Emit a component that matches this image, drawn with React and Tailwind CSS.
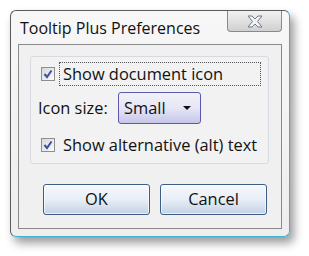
import React from 'react';

const font = { fontFamily: '"Open Sans", "Noto Sans", "Liberation Sans", sans-serif' };

const Check = () => (
  <span className="flex h-[14px] w-[14px] items-center justify-center border border-[#8f8f8f] bg-gradient-to-br from-[#d8d8d8] to-[#fbfbfb]">
    <svg width="10" height="10" viewBox="0 0 10 10">
      <path d="M1.5 5 L4 8 L8.5 1.5" fill="none" stroke="#3d4fa8" strokeWidth="2" />
    </svg>
  </span>
);

const Button = ({ children }) => (
  <button className="flex h-[31px] w-[107px] items-center justify-center rounded-[3px] border border-[#3c5d86] bg-gradient-to-b from-[#f6f9fc] via-[#e8eef6] to-[#c3d2e5] text-[16.4px] text-[#111] shadow-[inset_0_0_0_1px_#ffffffaa]">
    {children}
  </button>
);

export default function App() {
  return (
    <div className="h-[256px] w-[309px] bg-white pl-[10px] pt-[10px]" style={font}>
      <div className="relative flex h-[227px] w-[280px] flex-col rounded-[6px] border border-[#5b5b5b] border-r-[#3fb0cf] border-b-[#3fb0cf] bg-gradient-to-b from-[#f7f7f7] to-[#eeeeee] px-[7px] pb-[7px] shadow-[4px_6px_10px_rgba(0,0,0,0.4)]">
        <div className="flex h-[33px] items-start justify-between">
          <span className="pl-[2px] pt-[7px] text-[16px] leading-[20px] text-[#111]">Tooltip Plus Preferences</span>
          <div className="flex h-[21px] w-[55px] items-center justify-center rounded-b-[4px] border border-t-0 border-[#8a8a8a] bg-gradient-to-b from-[#f2f2f2] to-[#d0d0d0]">
            <svg width="18" height="13" viewBox="0 0 18 13">
              <path
                d="M2 1 H6 L9 4 L12 1 H16 L11.5 6.5 L16 12 H12 L9 9 L6 12 H2 L6.5 6.5 Z"
                fill="#f4f4f4"
                stroke="#707a88"
                strokeWidth="1"
                strokeLinejoin="round"
              />
            </svg>
          </div>
        </div>
        <div className="flex flex-1 flex-col border border-[#8a8a8a] bg-[#f0f0f0] pl-[11px] pt-[11px]">
          <div className="flex h-[108px] w-[239px] flex-col rounded-[3px] border border-[#d5dbe0] bg-[#f2f2f2] pl-[10px] text-[16.4px] text-[#111]">
            <div className="mt-[5px] flex h-[24px] items-center">
              <Check />
              <span className="ml-[4px] flex h-[24px] w-[202px] items-center border border-dotted border-[#555] pl-[3px]">Show document icon</span>
            </div>
            <div className="mt-[6px] flex h-[32px] items-center">
              <span className="ml-[-3px] w-[80px]">Icon size:</span>
              <div className="flex h-[32px] w-[83px] items-center justify-between rounded-[3px] border border-[#5a58b0] bg-gradient-to-b from-[#f1f1fa] via-[#e6e6f6] to-[#c6c6ea] pl-[5px] pr-[9px]">
                <span>Small</span>
                <svg width="8" height="4" viewBox="0 0 8 4">
                  <path d="M0 0 H8 L4 4 Z" fill="#111" />
                </svg>
              </div>
            </div>
            <div className="mt-[11px] flex h-[20px] items-center">
              <Check />
              <span className="ml-[8px]">Show alternative (alt) text</span>
            </div>
          </div>
          <div className="mt-[20px] flex gap-[10px] pl-[13px]">
            <Button>OK</Button>
            <Button>Cancel</Button>
          </div>
        </div>
      </div>
    </div>
  );
}
